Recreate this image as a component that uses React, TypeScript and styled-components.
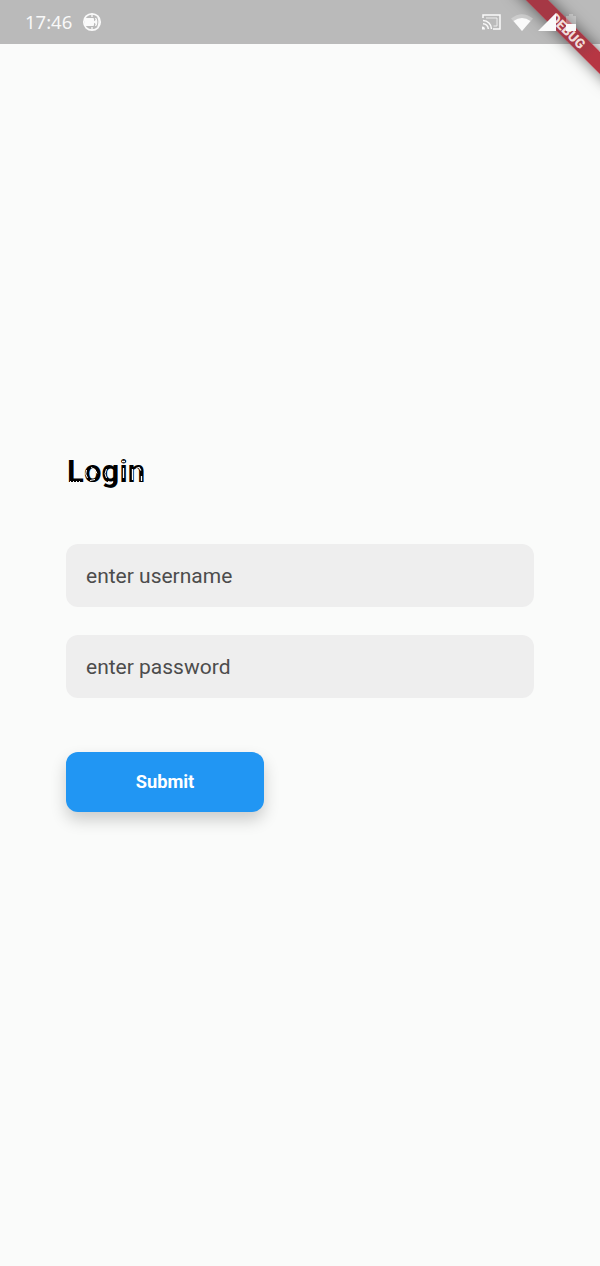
import React from "react";
import styled, { createGlobalStyle } from "styled-components";

const GlobalStyle = createGlobalStyle`
  * { box-sizing: border-box; }
  body { margin: 0; background: #fafbfa; font-family: Roboto, sans-serif; }
`;

const Screen = styled.div`
  position: relative;
  width: 600px;
  height: 1266px;
  overflow: hidden;
  background: #fafbfa;
  display: flex;
  flex-direction: column;
`;

const StatusBar = styled.header`
  flex: none;
  height: 44px;
  padding: 0 24px 0 25px;
  display: flex;
  align-items: center;
  background: #bababa;
  color: #f8f8f8;
`;

const Clock = styled.time`
  width: 57px;
  font: 400 18.5px/44px "Noto Sans", sans-serif;
`;

const StatusIcons = styled.div`
  position: relative;
  z-index: 2;
  margin-left: auto;
  display: flex;
  align-items: center;
`;

const Icon = styled.svg<{ $gap?: number }>`
  display: block;
  flex: none;
  margin-left: ${(p) => p.$gap ?? 0}px;
`;

const DebugBanner = styled.div`
  position: absolute;
  z-index: 1;
  left: 498px;
  top: 23px;
  width: 140px;
  height: 16px;
  transform: rotate(45deg);
  background: linear-gradient(90deg, #a63845 0 65%, #b63643 75%);
  box-shadow: 0 0 15px rgba(0, 0, 0, 0.55);
  color: #f1dcda;
  font: 900 13.5px/16px Roboto, sans-serif;
  text-align: center;
`;

const LoginForm = styled.form`
  margin-top: 406px;
  padding: 0 66px;
  display: flex;
  flex-direction: column;
  align-items: flex-start;
`;

const Title = styled.h1`
  position: relative;
  margin: 0 0 50px;
  padding-left: 1px;
  height: 44px;
  font: 700 31px/44px Roboto, sans-serif;
  letter-spacing: 0.15px;
  color: #000;
`;

const TitleWear = styled.svg`
  position: absolute;
  left: 0;
  top: 0;
`;

const Field = styled.input`
  width: 100%;
  height: 63px;
  margin: 0 0 28px;
  padding: 1px 20px 0;
  border: 0;
  border-radius: 12px;
  outline: none;
  background: #eeeeee;
  font: 400 21px/61px Roboto, sans-serif;
  color: #4c4c4c;
  &::placeholder { color: #4c4c4c; opacity: 1; }
`;

const SubmitButton = styled.button`
  width: 198px;
  height: 60px;
  margin-top: 26px;
  padding: 0;
  border: 0;
  border-radius: 12px;
  background: #2196f3;
  box-shadow: 0 8px 16px rgba(0, 0, 0, 0.19);
  color: #fff;
  font: 700 18.3px/60px Roboto, sans-serif;
`;

export default function App() {
  return (
    <>
      <GlobalStyle />
      <Screen>
        <StatusBar>
          <Clock>17:46</Clock>
          <Icon width="20" height="20" viewBox="0 0 20 20" fill="none" stroke="#fafafa">
            <circle cx="10" cy="10" r="8.2" strokeWidth="1.7" />
            <path d="M10 2v3M10 15v3M13.5 6q2.5 4 0 8M16 5q2 5 0 10" strokeWidth="1.3" />
            <rect x="2.5" y="6" width="9.5" height="8" rx="1" fill="#fafafa" stroke="none" />
            <path d="M11 10l4-3v6z" fill="#fafafa" stroke="none" />
          </Icon>
          <StatusIcons>
            <Icon width="19" height="16" viewBox="0 0 19 16" fill="none" stroke="#fafafa" strokeWidth="1.5">
              <path d="M1 4V1h17v14h-7" />
              <path d="M1 6.5A8.5 8.5 0 0 1 9.5 15M1 9.7A5.3 5.3 0 0 1 6.3 15" />
              <path d="M4 4h11v8h-3.5" strokeWidth="1" opacity=".8" />
              <path d="M0 12.5A3 3 0 0 1 3 15.5H0z" fill="#fafafa" stroke="none" />
            </Icon>
            <Icon $gap={10} width="22" height="17" viewBox="0 0 22 17">
              <path d="M0 4.5Q11-4 22 4.5L11 17z" fill="#fafafa" opacity=".3" />
              <path d="M2.5 7Q11 1 19.5 7L11 17z" fill="#fafafa" />
            </Icon>
            <Icon $gap={5} width="18" height="18" viewBox="0 0 18 18">
              <path d="M18 0v18H0z" fill="#fafafa" />
            </Icon>
            <Icon $gap={10} width="10" height="17" viewBox="0 0 10 17">
              <path d="M0 2h3V0h4v2h3v8H0z" fill="#fafafa" opacity=".3" />
              <path d="M0 10h10v7H0z" fill="#fafafa" />
            </Icon>
          </StatusIcons>
        </StatusBar>
        <DebugBanner>DEBUG</DebugBanner>
        <LoginForm onSubmit={(e) => e.preventDefault()}>
          <Title>
            Login
            <TitleWear width="82" height="44" viewBox="0 0 82 44" fill="none" stroke="#fafbfa" strokeWidth="1" aria-hidden="true">
              <path d="M4 31.5h10" strokeDasharray="1 2" />
              <path d="M20.5 20q-2 4 1 8M25 17.5q5 1 6 6M24 30.5l5-1M40.5 19q-3 5 0 9M42 31.5l5 1M39 37.5l6 1" />
              <path d="M57.5 18v10M56 11.5h3M66.5 19v11M70 18.5l3-1 2 3M75.5 26v5" strokeWidth="1.3" />
            </TitleWear>
          </Title>
          <Field placeholder="enter username" aria-label="username" />
          <Field placeholder="enter password" aria-label="password" type="text" />
          <SubmitButton>Submit</SubmitButton>
        </LoginForm>
      </Screen>
    </>
  );
}
